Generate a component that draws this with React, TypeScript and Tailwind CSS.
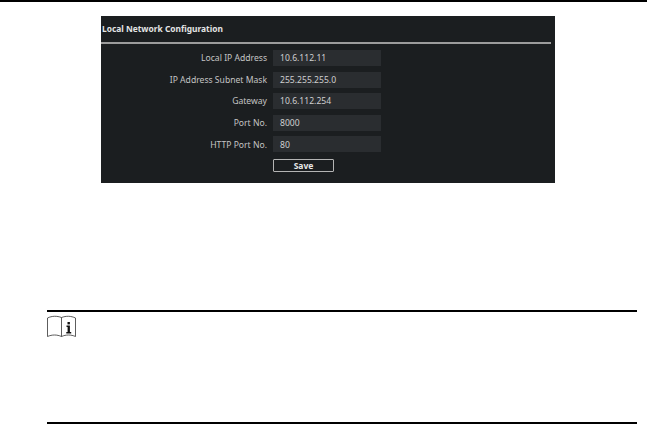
const rows = [
  { label: 'Local IP Address', value: '10.6.112.11' },
  { label: 'IP Address Subnet Mask', value: '255.255.255.0' },
  { label: 'Gateway', value: '10.6.112.254' },
  { label: 'Port No.', value: '8000' },
  { label: 'HTTP Port No.', value: '80' },
]

function NoteIcon() {
  return (
    <svg width="30" height="23" viewBox="0 0 30 23" fill="none" stroke="#333" strokeWidth="0.8">
      <path d="M0.5 3 C5 0.8 10 0.8 14.5 2.5 C19 0.8 24 0.8 28.5 3 V21.5 C24 19.5 19 19.5 14.5 21.5 C10 19.5 5 19.5 0.5 21.5 Z" />
      <path d="M14.5 2.5 V21.5" />
      <rect x="20.5" y="7" width="2.4" height="2.4" fill="#111" stroke="none" />
      <path d="M19.5 10.6 H22.9 V17 H24.2 V18.4 H19.3 V17 H20.6 V12 H19.5 Z" fill="#111" stroke="none" />
    </svg>
  )
}

export default function App() {
  return (
    <div className="w-[648px] h-[425px] bg-white overflow-hidden flex flex-col font-['Noto_Sans',sans-serif]">
      <div className="h-[2px] w-[647px] bg-black" />

      <div className="ml-[101px] mt-[14px] w-[454px] h-[167px] bg-[#1b1e20] flex flex-col">
        <div className="h-[26px] pl-[1px] flex items-center text-[8.4px] font-bold text-[#e4e4e4] leading-none">
          Local Network Configuration
        </div>
        <div className="h-[2px] w-[450px] bg-[#9c9c9c]" />
        <div className="mt-[6px] flex flex-col gap-[5.6px]">
          {rows.map((row) => (
            <div key={row.label} className="flex items-center h-[16px]">
              <div className="w-[166px] pt-[1px] text-right text-[8.6px] text-[#c4c4c4] leading-none">{row.label}</div>
              <div className="ml-[6px] w-[108px] h-[16px] bg-[#2a2d30] pl-[7px] pt-[1px] flex items-center text-[8.6px] text-[#d0d0d0] leading-none">
                {row.value}
              </div>
            </div>
          ))}
        </div>
        <button className="ml-[172px] mt-[6.6px] w-[61px] h-[13px] pt-[1px] border border-[#b4b4b4] rounded-[1px] flex items-center justify-center text-[8.5px] font-bold text-[#e8e8e8] leading-none">
          Save
        </button>
      </div>

      <div className="ml-[47px] mt-[127px] w-[590px] h-[114px] border-t-2 border-b-2 border-black">
        <div className="pt-[3px]">
          <NoteIcon />
        </div>
      </div>
    </div>
  )
}
